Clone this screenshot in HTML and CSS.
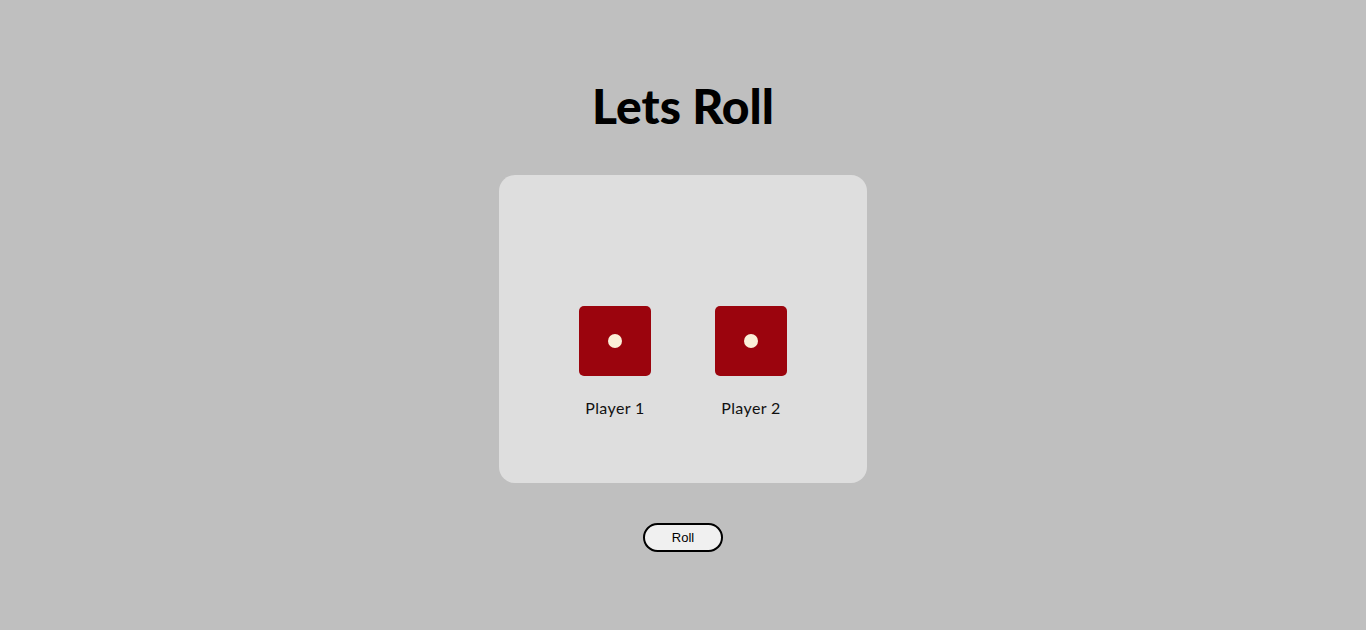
FILE: index.html
```html
<!DOCTYPE html>
<html>
<head>
<meta charset="utf-8">
<title>Lets Roll</title>
<link rel="stylesheet" href="styles.css">
</head>
<body>
<main class="page">
  <h1 class="title">Lets Roll</h1>
  <section class="card">
    <div class="players">
      <div class="player">
        <div class="die"><span class="pip"></span></div>
        <p class="label">Player 1</p>
      </div>
      <div class="player">
        <div class="die"><span class="pip"></span></div>
        <p class="label">Player 2</p>
      </div>
    </div>
  </section>
  <button class="roll">Roll</button>
</main>
</body>
</html>
```
FILE: styles.css
```css
html, body {
  margin: 0;
  padding: 0;
  background: #bfbfbf;
  height: 100%;
}
.page {
  display: flex;
  flex-direction: column;
  align-items: center;
  padding-top: 77px;
}
.title {
  margin: 0;
  font-family: "Lato", "Liberation Sans", sans-serif;
  font-weight: 900;
  font-size: 48px;
  line-height: 58px;
  color: #000;
  letter-spacing: 0;
}
.card {
  margin-top: 40px;
  width: 368px;
  height: 308px;
  box-sizing: border-box;
  background: #dedede;
  border-radius: 16px;
  padding-top: 131px;
  display: flex;
  justify-content: center;
}
.players {
  display: flex;
  gap: 64px;
  align-items: flex-start;
}
.player {
  display: flex;
  flex-direction: column;
  align-items: center;
}
.die {
  width: 72px;
  height: 70px;
  background: #9b040d;
  border-radius: 5px;
  display: flex;
  align-items: center;
  justify-content: center;
}
.pip {
  width: 14px;
  height: 14px;
  border-radius: 50%;
  background: #fbf0d8;
}
.label {
  margin: 22px 0 0;
  font-family: "Lato", "Liberation Sans", sans-serif;
  font-weight: 400;
  font-size: 16px;
  line-height: 20px;
  letter-spacing: 0.4px;
  color: #111;
  white-space: nowrap;
}
.roll {
  margin-top: 40px;
  width: 80px;
  height: 29px;
  border: 2px solid #000;
  border-radius: 15px;
  background: #f0f0f0;
  font-family: "Liberation Sans", Arial, sans-serif;
  font-size: 13px;
  color: #000;
  padding: 0;
}
```
